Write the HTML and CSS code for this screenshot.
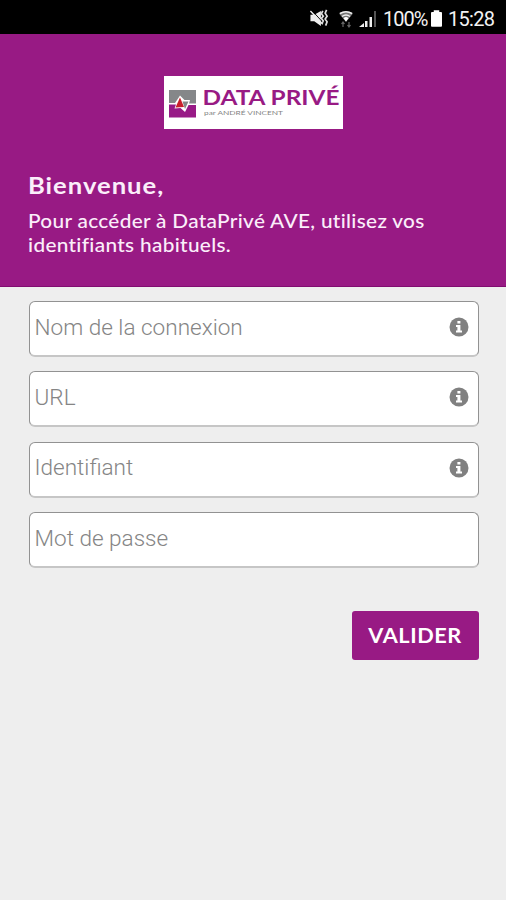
FILE: index.html
```html
<!DOCTYPE html>
<html lang="fr">
<head>
<meta charset="utf-8">
<title>Data Privé</title>
<link rel="stylesheet" href="styles.css">
</head>
<body>
<svg class="defs" width="0" height="0">
  <symbol id="info" viewBox="0 0 20 20">
    <circle cx="10" cy="10" r="9.5" fill="#808080"/>
    <path d="M8.400 4h3v2.600h-3zM7 8h4.400v5.400H13V15.400H7v-2h1.400V10H7z" fill="#fff"/>
  </symbol>
</svg>
<div class="status">
  <svg class="mute" viewBox="0 0 20 20">
    <path d="M1 6h4l7-4v16l-7-5H1z" fill="#eee"/>
    <path d="M1 2l13 14" stroke="#eee" stroke-width="1.500"/>
    <path d="M2 1l13 14" stroke="#000" stroke-width="1"/>
    <path d="M14 2l-1.500 3 2 2.500-2 2.500 2 2.500-1.500 3M18 1l-1.500 3.500 2 3-2 3 2 3-1.500 4" fill="none" stroke="#ddd" stroke-width="1.800"/>
  </svg>
  <svg class="wifi" viewBox="0 0 14 18">
    <path d="M0 3.500Q7-1.500 14 3.500L7 12z" fill="#777"/>
    <path d="M1 3.500Q7 0 13 3.500M3 6.500q4-3 8 0" fill="none" stroke="#eee" stroke-width="1.500"/>
    <path d="M4.500 8.200Q7 6 9.500 8.200L7 11.500z" fill="#fff"/>
    <path d="M4 12v5M2.500 14L4 12l1.500 2M10 12v5M8.500 15l1.500 2 1.500-2" fill="none" stroke="#666" stroke-width="1.200"/>
  </svg>
  <svg class="signal" viewBox="0 0 18 18">
    <path d="M0 17l5-4v4zM6 11h2.500v6H6zM10.500 7H13v10h-2.500z" fill="#eee"/>
    <path d="M15 1h2v16h-2z" fill="#555"/>
  </svg>
  <span class="percent">100%</span>
  <svg class="battery" viewBox="0 0 12 18"><path d="M3 0h6v2h2q1 0 1 1v14q0 1-1 1H1q-1 0-1-1V3q0-1 1-1h2z" fill="#fff"/></svg>
  <span class="clock">15:28</span>
</div>
<header class="hero">
  <svg class="logo" viewBox="0 0 179 53">
    <rect width="179" height="53" fill="#fff"/>
    <rect x="5" y="14" width="27" height="14" fill="#858789"/>
    <rect x="5" y="28" width="27" height="13.500" fill="#981a86"/>
    <path d="M5 27h6l5-7.500 4.500 4.500H26l-1 3.500h7v1.500h-7.500L21 36l-4.500-4-6 .5 1.500-4H5z" fill="#fff"/>
    <path d="M16 21.500l4 9.500-8.500.5z" fill="#c91f2b"/>
    <path d="M18.500 25.500h6L21 33z" fill="#858789"/>
    <text class="brand" x="38.500" y="29" textLength="137" lengthAdjust="spacingAndGlyphs">DATA PRIVÉ</text>
    <text class="byline" x="40" y="39" textLength="79" lengthAdjust="spacingAndGlyphs">par ANDRÉ VINCENT</text>
  </svg>
  <h1>Bienvenue,</h1>
  <p>Pour accéder à DataPrivé AVE, utilisez vos<br>identifiants habituels.</p>
</header>
<main class="form">
  <div class="field"><span>Nom de la connexion</span><svg class="info"><use href="#info"/></svg></div>
  <div class="field"><span>URL</span><svg class="info"><use href="#info"/></svg></div>
  <div class="field"><span>Identifiant</span><svg class="info"><use href="#info"/></svg></div>
  <div class="field"><span>Mot de passe</span></div>
  <button class="submit"><span>VALIDER</span></button>
</main>
</body>
</html>
```

FILE: styles.css
```css
* { box-sizing: border-box; }
body {
  margin: 0;
  min-height: 900px;
  background: #eee;
  font-family: Roboto, "Liberation Sans", sans-serif;
}
.defs { display: block; }
.status {
  height: 34px;
  padding: 3px 11px 0 0;
  display: flex;
  align-items: center;
  justify-content: flex-end;
  background: #000;
  color: #f2f2f2;
  font-size: 20px;
  white-space: nowrap;
}
.mute { width: 20px; height: 19px; margin-right: 10px; }
.wifi { width: 14px; height: 18px; margin-right: 6px; }
.signal { width: 18px; height: 18px; margin-right: 6px; }
.percent { width: 44px; letter-spacing: -1px; }
.battery { width: 11px; height: 17px; margin: 0 6px 0 4px; }
.clock { width: 47px; letter-spacing: -0.7px; }
.hero {
  height: 253px;
  padding: 42px 28px 0;
  background: #981a84;
  border-bottom: 1px solid #800d70;
  color: #fbeefa;
  font-family: Lato, sans-serif;
}
.logo { display: block; width: 179px; height: 53px; margin: 0 auto 0 136px; }
.brand { font: 700 20.5px Lato, sans-serif; fill: #981a84; }
.byline { font: 6.500px Lato, sans-serif; fill: #858585; }
h1 {
  margin: 42px 0 0;
  font-size: 23.500px;
  line-height: 28px;
  font-weight: 700;
  letter-spacing: 0.9px;
  transform: scaleX(1.09);
  transform-origin: left;
}
p {
  margin: 9px 0 0;
  font-size: 20px;
  line-height: 24px;
  font-weight: 500;
  letter-spacing: 0.3px;
  white-space: nowrap;
  transform: scaleX(1.04);
  transform-origin: left;
}
.form {
  display: flex;
  flex-direction: column;
  gap: 14.400px;
  padding: 14px 27.500px 0 28.500px;
}
.field {
  height: 56px;
  display: flex;
  align-items: center;
  justify-content: space-between;
  padding: 0 9px 3px 5px;
  border: 1px solid #929292;
  border-bottom: 2px solid #c6c6c6;
  border-radius: 6px;
  background: #fff;
  color: #858585;
  font-size: 22.550px;
  font-weight: 300;
  white-space: nowrap;
}
.info { width: 20px; height: 20px; }
.submit {
  align-self: flex-end;
  width: 127px;
  height: 49px;
  margin-top: 28.400px;
  padding: 0;
  border: 0;
  border-radius: 3px;
  background: #981a84;
  color: #fff;
  font: 700 20.500px Lato, sans-serif;
  letter-spacing: 0.5px;
}
.submit span { display: inline-block; transform: scaleX(1.060); }
```
